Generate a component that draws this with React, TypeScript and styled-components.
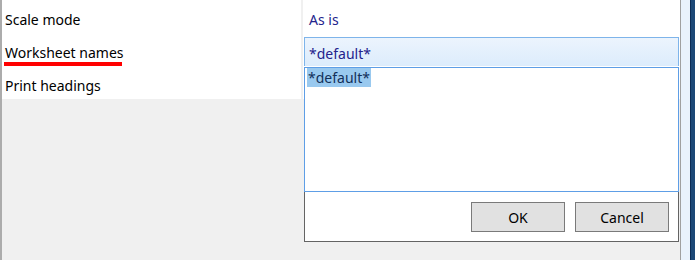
import React from 'react';
import styled, { createGlobalStyle } from 'styled-components';

const GlobalStyle = createGlobalStyle`
  html, body {
    margin: 0;
    padding: 0;
    background: #f0f0f0;
  }
  body {
    font-family: 'Noto Sans', 'Open Sans', sans-serif;
    font-size: 14px;
    color: #000;
  }
`;

const Frame = styled.div`
  display: flex;
  width: 695px;
  height: 260px;
  overflow: hidden;
`;

const PropertyPanel = styled.section`
  position: relative;
  width: 681px;
  box-sizing: border-box;
  border-left: 2px solid #acacac;
  border-right: 1px solid #a0a0a0;
  background: #f0f0f0;
`;

const Grid = styled.div`
  display: grid;
  grid-template-columns: 299px 377px;
  grid-auto-rows: 33px;
  column-gap: 2px;
`;

const LabelCell = styled.div<{ $marked?: boolean }>`
  position: relative;
  background: #fff;
  padding: 5px 0 0 3px;
  display: flex;
  align-items: center;
  white-space: nowrap;

  ${(p) =>
    p.$marked &&
    `
    &::after {
      content: '';
      position: absolute;
      left: 2px;
      top: 29px;
      width: 118px;
      height: 4px;
      background: #ff0000;
    }
  `}
`;

const ValueCell = styled.div`
  background: #fff;
  padding: 5px 0 0 6px;
  display: flex;
  align-items: center;
  color: #24238c;
  white-space: nowrap;
`;

const EditCell = styled.div`
  background: #fff;
  padding: 4px 1px 0 1px;
`;

const Combo = styled.div`
  box-sizing: border-box;
  height: 30px;
  border: 1px solid #7eb4ea;
  background: linear-gradient(#ecf4fd, #dcecfc);
  color: #24238c;
  padding: 2px 0 0 4px;
  display: flex;
  align-items: center;
`;

const Popup = styled.div`
  position: absolute;
  left: 302px;
  top: 67px;
  width: 375px;
  height: 175px;
  box-sizing: border-box;
  display: flex;
  flex-direction: column;
  background: #fff;
  border: 1px solid #646464;
  border-top: none;
`;

const List = styled.ul`
  margin: 0 -1px;
  padding: 0 0 0 2px;
  list-style: none;
  height: 125px;
  box-sizing: border-box;
  border: 1px solid #5e9ee6;
`;

const ListItem = styled.li`
  line-height: 19px;
`;

const Selected = styled.span`
  display: inline-block;
  background: #99c9ef;
  color: #12305a;
  padding: 0 1px;
`;

const Buttons = styled.div`
  flex: 1;
  display: flex;
  justify-content: flex-end;
  align-items: flex-end;
  gap: 10px;
  padding: 0 9px 9px 0;
`;

const Button = styled.button`
  width: 94px;
  height: 30px;
  box-sizing: border-box;
  border: 1px solid #7a7a7a;
  background: #e1e1e1;
  font-family: inherit;
  font-size: 14px;
  color: #000;
  padding: 0;
`;

const SideStrip = styled.div`
  width: 9px;
  background: #e9f2fc;
`;

const Edge = styled.div`
  flex: 1;
  background: #1c4877;
  border-left: 1px solid #0b2c55;
`;

export default function App() {
  return (
    <>
      <GlobalStyle />
      <Frame>
        <PropertyPanel>
          <Grid>
            <LabelCell>Scale mode</LabelCell>
            <ValueCell>As is</ValueCell>
            <LabelCell $marked>Worksheet names</LabelCell>
            <EditCell>
              <Combo>*default*</Combo>
            </EditCell>
            <LabelCell>Print headings</LabelCell>
            <ValueCell />
          </Grid>
          <Popup>
            <List>
              <ListItem>
                <Selected>*default*</Selected>
              </ListItem>
            </List>
            <Buttons>
              <Button>OK</Button>
              <Button>Cancel</Button>
            </Buttons>
          </Popup>
        </PropertyPanel>
        <SideStrip />
        <Edge />
      </Frame>
    </>
  );
}
